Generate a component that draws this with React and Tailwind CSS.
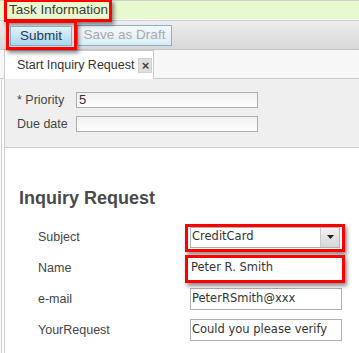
import React from "react";

const arial = { fontFamily: '"Liberation Sans", Arial, sans-serif' };
const tahoma = { fontFamily: '"DejaVu Sans", Tahoma, sans-serif' };

// red annotation frame drawn over a field
function Mark({ className }) {
  return (
    <div
      className={`pointer-events-none absolute border-[3px] border-[#ff0000] shadow-[2px_3px_4px_rgba(0,0,0,0.45)] ${className}`}
    />
  );
}

function FormRow({ label, children }) {
  return (
    <div className="flex items-center h-[31px]">
      <div className="w-[188px] pl-[36px] text-[12.5px] text-[#444]" style={arial}>
        {label}
      </div>
      {children}
    </div>
  );
}

export default function App() {
  return (
    <div className="w-[359px] h-[353px] overflow-hidden bg-white text-[#333]" style={arial}>
      {/* task information bar */}
      <div className="border-t border-[#cfcfcf] h-[19px] bg-[#e8f8cf] flex items-center pl-[9px]">
        <div className="relative text-[13.5px] text-[#3a3a3a] leading-none">
          Task Information
          <Mark className="-left-[5px] -right-[4px] -top-[4px] -bottom-[5px]" />
        </div>
      </div>
      <div className="h-px bg-white" />
      <div className="h-px bg-[#d2d2d2]" />

      {/* toolbar */}
      <div className="h-[28px] bg-gradient-to-b from-[#ededed] to-[#d8d8d8] flex items-center pl-[10px] gap-[5px]">
        <div className="relative">
          <button className="w-[62px] h-[20px] border border-[#7fb1cc] bg-gradient-to-b from-[#e4f3fb] to-[#a9d5ec] text-[13.5px] text-[#1f3c55] leading-none">
            Submit
          </button>
          <Mark className="-left-[4px] -right-[5px] -top-[3px] -bottom-[3px]" />
        </div>
        <button className="w-[95px] h-[21px] border border-[#80b3cf] bg-gradient-to-b from-[#f4fafd] to-[#dcecf5] text-[13.5px] text-[#a9a9a9] leading-none">
          Save as Draft
        </button>
      </div>
      <div className="h-px bg-[#c6c6c6]" />

      {/* tab strip */}
      <div className="h-[29px] bg-[#f7f7f7] border-b border-[#cccccc] flex items-end pl-[4px]">
        <div className="h-[29px] w-[150px] bg-white border border-b-0 border-[#cccccc] flex items-center pl-[12px] gap-[4px] -mb-px">
          <span className="text-[12.5px] text-[#333]">Start Inquiry Request</span>
          <span className="w-[14px] h-[15px] bg-[#dedede] border border-[#cfcfcf] flex items-center justify-center text-[13px] font-bold text-[#444] leading-none">
            ×
          </span>
        </div>
      </div>

      {/* body with double left rule */}
      <div className="ml-[1px] border-l border-[#cccccc] h-full">
        <div className="ml-[2px] border-l border-[#cccccc] h-full">
          <div className="bg-[#efefef] border-b border-[#cccccc] pt-[12px] pb-[13px] pl-[12px] flex flex-col gap-[5px]">
            <div className="flex items-center">
              <span className="w-[59px] text-[12.5px] text-[#444]">* Priority</span>
              <div className="w-[182px] h-[16px] border border-[#adadad] bg-gradient-to-b from-[#f0f0f0] to-white text-[13px] leading-[14px] pl-[2px]">
                5
              </div>
            </div>
            <div className="flex items-center">
              <span className="w-[59px] text-[12.5px] text-[#444]">Due date</span>
              <div className="w-[182px] h-[16px] border border-[#adadad] bg-gradient-to-b from-[#f0f0f0] to-white" />
            </div>
          </div>

          <div className="pt-[41px]">
            <h2 className="pl-[14px] text-[18px] font-bold text-[#4a4a4a] leading-none">Inquiry Request</h2>
            <div className="mt-[15px] -ml-[3px]" style={tahoma}>
              <FormRow label="Subject">
                <div className="relative">
                  <div className="w-[150px] h-[21px] border border-[#b0b0b0] bg-white flex items-center">
                    <span className="flex-1 pl-[1px] text-[11.5px] text-[#333]">CreditCard</span>
                    <span className="w-[19px] h-full border-l border-[#c8c8c8] bg-gradient-to-b from-[#f2f2f2] to-[#d6d6d6] flex items-center justify-center">
                      <svg width="7" height="4" viewBox="0 0 7 4">
                        <path d="M0 0h7L3.5 4z" fill="#222" />
                      </svg>
                    </span>
                  </div>
                  <Mark className="-left-[5px] -right-[5px] -top-[3px] -bottom-[4px]" />
                </div>
              </FormRow>
              <FormRow label="Name">
                <div className="relative">
                  <div className="w-[150px] h-[21px] bg-white flex items-center pl-[1px] text-[11.5px] text-[#333]">
                    Peter R. Smith
                  </div>
                  <Mark className="-left-[5px] -right-[5px] -top-[3px] -bottom-[4px]" />
                </div>
              </FormRow>
              <FormRow label="e-mail">
                <div className="w-[152px] h-[22px] border border-[#b0b0b0] bg-white flex items-center pl-[1px] text-[11.5px] text-[#333]">
                  PeterRSmith@xxx
                </div>
              </FormRow>
              <FormRow label="YourRequest">
                <div className="w-[152px] h-[22px] border border-[#b0b0b0] bg-white flex items-center pl-[1px] text-[11.5px] text-[#333]">
                  Could you please verify
                </div>
              </FormRow>
            </div>
          </div>
        </div>
      </div>
    </div>
  );
}
